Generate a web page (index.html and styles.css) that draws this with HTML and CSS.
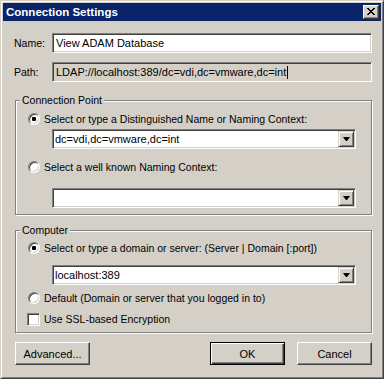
FILE: index.html
```html
<!DOCTYPE html>
<html lang="en">
<head>
    <meta charset="UTF-8">
    <title>Connection Settings</title>
    <link rel="stylesheet" href="styles.css">
</head>
<body>
    <div class="window">
        <!-- Title bar -->
        <div class="titlebar">
            <span class="title">Connection Settings</span>
            <span class="close-btn">
                <svg width="8" height="7" viewBox="0 0 8 7" shape-rendering="crispEdges">
                    <path fill="#000" d="M0 0h2v1H0z M6 0h2v1H6z M1 1h2v1H1z M5 1h2v1H5z M2 2h4v1H2z M3 3h2v1H3z M2 4h4v1H2z M1 5h2v1H1z M5 5h2v1H5z M0 6h2v1H0z M6 6h2v1H6z"/>
                </svg>
            </span>
        </div>

        <div class="content">
            <div class="field-row">
                <label>Name:</label>
                <div class="textbox">View ADAM Database</div>
            </div>
            <div class="field-row path-row">
                <label>Path:</label>
                <div class="textbox readonly">LDAP://localhost:389/dc=vdi,dc=vmware,dc=int<span class="caret"></span></div>
            </div>

            <!-- Connection point -->
            <fieldset class="group group-conn">
                <legend>Connection Point</legend>
                <div class="option opt-dn"><span class="radio checked"></span>Select or type a Distinguished Name or Naming Context:</div>
                <div class="combo combo-dn">
                    <span class="combo-text">dc=vdi,dc=vmware,dc=int</span>
                    <span class="drop-btn"><span class="arrow"></span></span>
                </div>
                <div class="option opt-known"><span class="radio"></span>Select a well known Naming Context:</div>
                <div class="combo combo-known">
                    <span class="combo-text"></span>
                    <span class="drop-btn"><span class="arrow"></span></span>
                </div>
            </fieldset>

            <!-- Computer -->
            <fieldset class="group group-comp">
                <legend>Computer</legend>
                <div class="option opt-server"><span class="radio checked"></span>Select or type a domain or server: (Server | Domain [:port])</div>
                <div class="combo combo-server">
                    <span class="combo-text">localhost:389</span>
                    <span class="drop-btn"><span class="arrow"></span></span>
                </div>
                <div class="option opt-default"><span class="radio"></span>Default (Domain or server that you logged in to)</div>
                <div class="option opt-ssl"><span class="check"></span>Use SSL-based Encryption</div>
            </fieldset>

            <div class="button-row">
                <button type="button" class="btn">Advanced...</button>
                <span class="spacer"></span>
                <button type="button" class="btn default">OK</button>
                <button type="button" class="btn">Cancel</button>
            </div>
        </div>
    </div>
</body>
</html>
```

FILE: styles.css
```css
/* Classic dialog look */
body {
    margin: 0;
    background-color: #d4d0c8;
    font-family: "Liberation Sans", Arial, sans-serif;
    font-size: 10.5px;
    color: #000;
}

.window {
    box-sizing: border-box;
    width: 384px;
    height: 379px;
    padding: 2px;
    border: 1px solid;
    border-color: #d4d0c8 #404040 #404040 #d4d0c8;
    box-shadow: inset 1px 1px #fff, inset -1px -1px #808080;
    display: flex;
    flex-direction: column;
}

.titlebar {
    height: 18px;
    background-color: #0a246a;
    display: flex;
    align-items: center;
    justify-content: space-between;
    padding: 0 2px 0 3px;
}

.title {
    color: #fff;
    font-weight: bold;
    font-size: 11.5px;
}

.close-btn {
    box-sizing: border-box;
    width: 16px;
    height: 14px;
    background-color: #d4d0c8;
    border: 1px solid;
    border-color: #fff #404040 #404040 #fff;
    box-shadow: inset -1px -1px #808080;
    display: flex;
    align-items: center;
    justify-content: center;
    padding: 0 1px 1px 0;
}

.content {
    padding: 12px 9px 0 11px;
}

.field-row {
    display: flex;
    align-items: center;
    height: 20px;
}

.field-row label {
    width: 38px;
}

.path-row {
    margin-top: 9px;
}

.textbox {
    flex: 1;
    box-sizing: border-box;
    height: 20px;
    padding: 0 3px;
    background-color: #fff;
    border: 1px solid;
    border-color: #808080 #fff #fff #808080;
    box-shadow: inset 1px 1px #404040, inset -1px -1px #d4d0c8;
    display: flex;
    align-items: center;
    font-size: 11px;
}

.textbox.readonly {
    background-color: #d4d0c8;
}

.caret {
    display: inline-block;
    width: 1px;
    height: 13px;
    margin-left: 1px;
    background-color: #000;
}

/* Group boxes */
.group {
    margin: 12px 0 0 1px;
    padding: 0 0 6px 0;
    min-width: 0;
    border: 1px solid #808080;
    box-shadow: inset 1px 1px #fff, 1px 1px #fff;
}

.group legend {
    margin-left: 4px;
    padding: 0 2px;
    line-height: 13px;
    background-color: #d4d0c8;
}

.group-comp {
    margin-top: 9px;
}

.option {
    display: flex;
    align-items: center;
    height: 14px;
    margin-left: 12px;
}

.radio {
    box-sizing: border-box;
    width: 12px;
    height: 12px;
    margin-right: 4px;
    border-radius: 50%;
    background-color: #fff;
    border: 1px solid;
    border-color: #808080 #fff #fff #808080;
    box-shadow: inset 1px 1px #404040, inset -1px -1px #d4d0c8;
    display: flex;
    align-items: center;
    justify-content: center;
}

.radio.checked::after {
    content: "";
    width: 4px;
    height: 4px;
    border-radius: 1px;
    background-color: #000;
}

.check {
    box-sizing: border-box;
    width: 13px;
    height: 13px;
    margin: 0 4px 0 -1px;
    background-color: #fff;
    border: 1px solid;
    border-color: #808080 #fff #fff #808080;
    box-shadow: inset 1px 1px #404040, inset -1px -1px #d4d0c8;
}

.combo {
    box-sizing: border-box;
    width: 304px;
    height: 20px;
    margin-left: 36px;
    padding: 0 1px 0 2px;
    background-color: #fff;
    border: 1px solid;
    border-color: #808080 #fff #fff #808080;
    box-shadow: inset 1px 1px #404040, inset -1px -1px #d4d0c8;
    display: flex;
    align-items: center;
    font-size: 11px;
}

.combo-text {
    flex: 1;
}

.drop-btn {
    box-sizing: border-box;
    width: 16px;
    height: 16px;
    background-color: #d4d0c8;
    border: 1px solid;
    border-color: #d4d0c8 #404040 #404040 #d4d0c8;
    box-shadow: inset 1px 1px #fff, inset -1px -1px #808080;
    display: flex;
    align-items: center;
    justify-content: center;
}

.arrow {
    width: 1px;
    height: 0;
    border-top: 4px solid #000;
    border-left: 3px solid transparent;
    border-right: 3px solid transparent;
}

/* vertical spacing inside groups */
.opt-dn { margin-top: 5px; }
.combo-dn { margin-top: 3px; }
.opt-known { margin-top: 11px; }
.combo-known { margin-top: 14px; }
.opt-server { margin-top: 4px; }
.combo-server { margin-top: 10px; }
.opt-default { margin-top: 6px; }
.opt-ssl { margin-top: 7px; }

/* Buttons */
.button-row {
    display: flex;
    margin: 9px 0 0 1px;
}

.spacer {
    flex: 1;
}

.btn {
    box-sizing: border-box;
    width: 75px;
    height: 23px;
    padding: 0;
    font-family: inherit;
    font-size: 11px;
    color: #000;
    background-color: #d4d0c8;
    border: 1px solid;
    border-color: #fff #404040 #404040 #fff;
    box-shadow: inset -1px -1px #808080;
}

.btn.default {
    margin-right: 12px;
    border-color: #000;
    box-shadow: inset 1px 1px #fff, inset -1px -1px #404040, inset -2px -2px #808080;
}
```
